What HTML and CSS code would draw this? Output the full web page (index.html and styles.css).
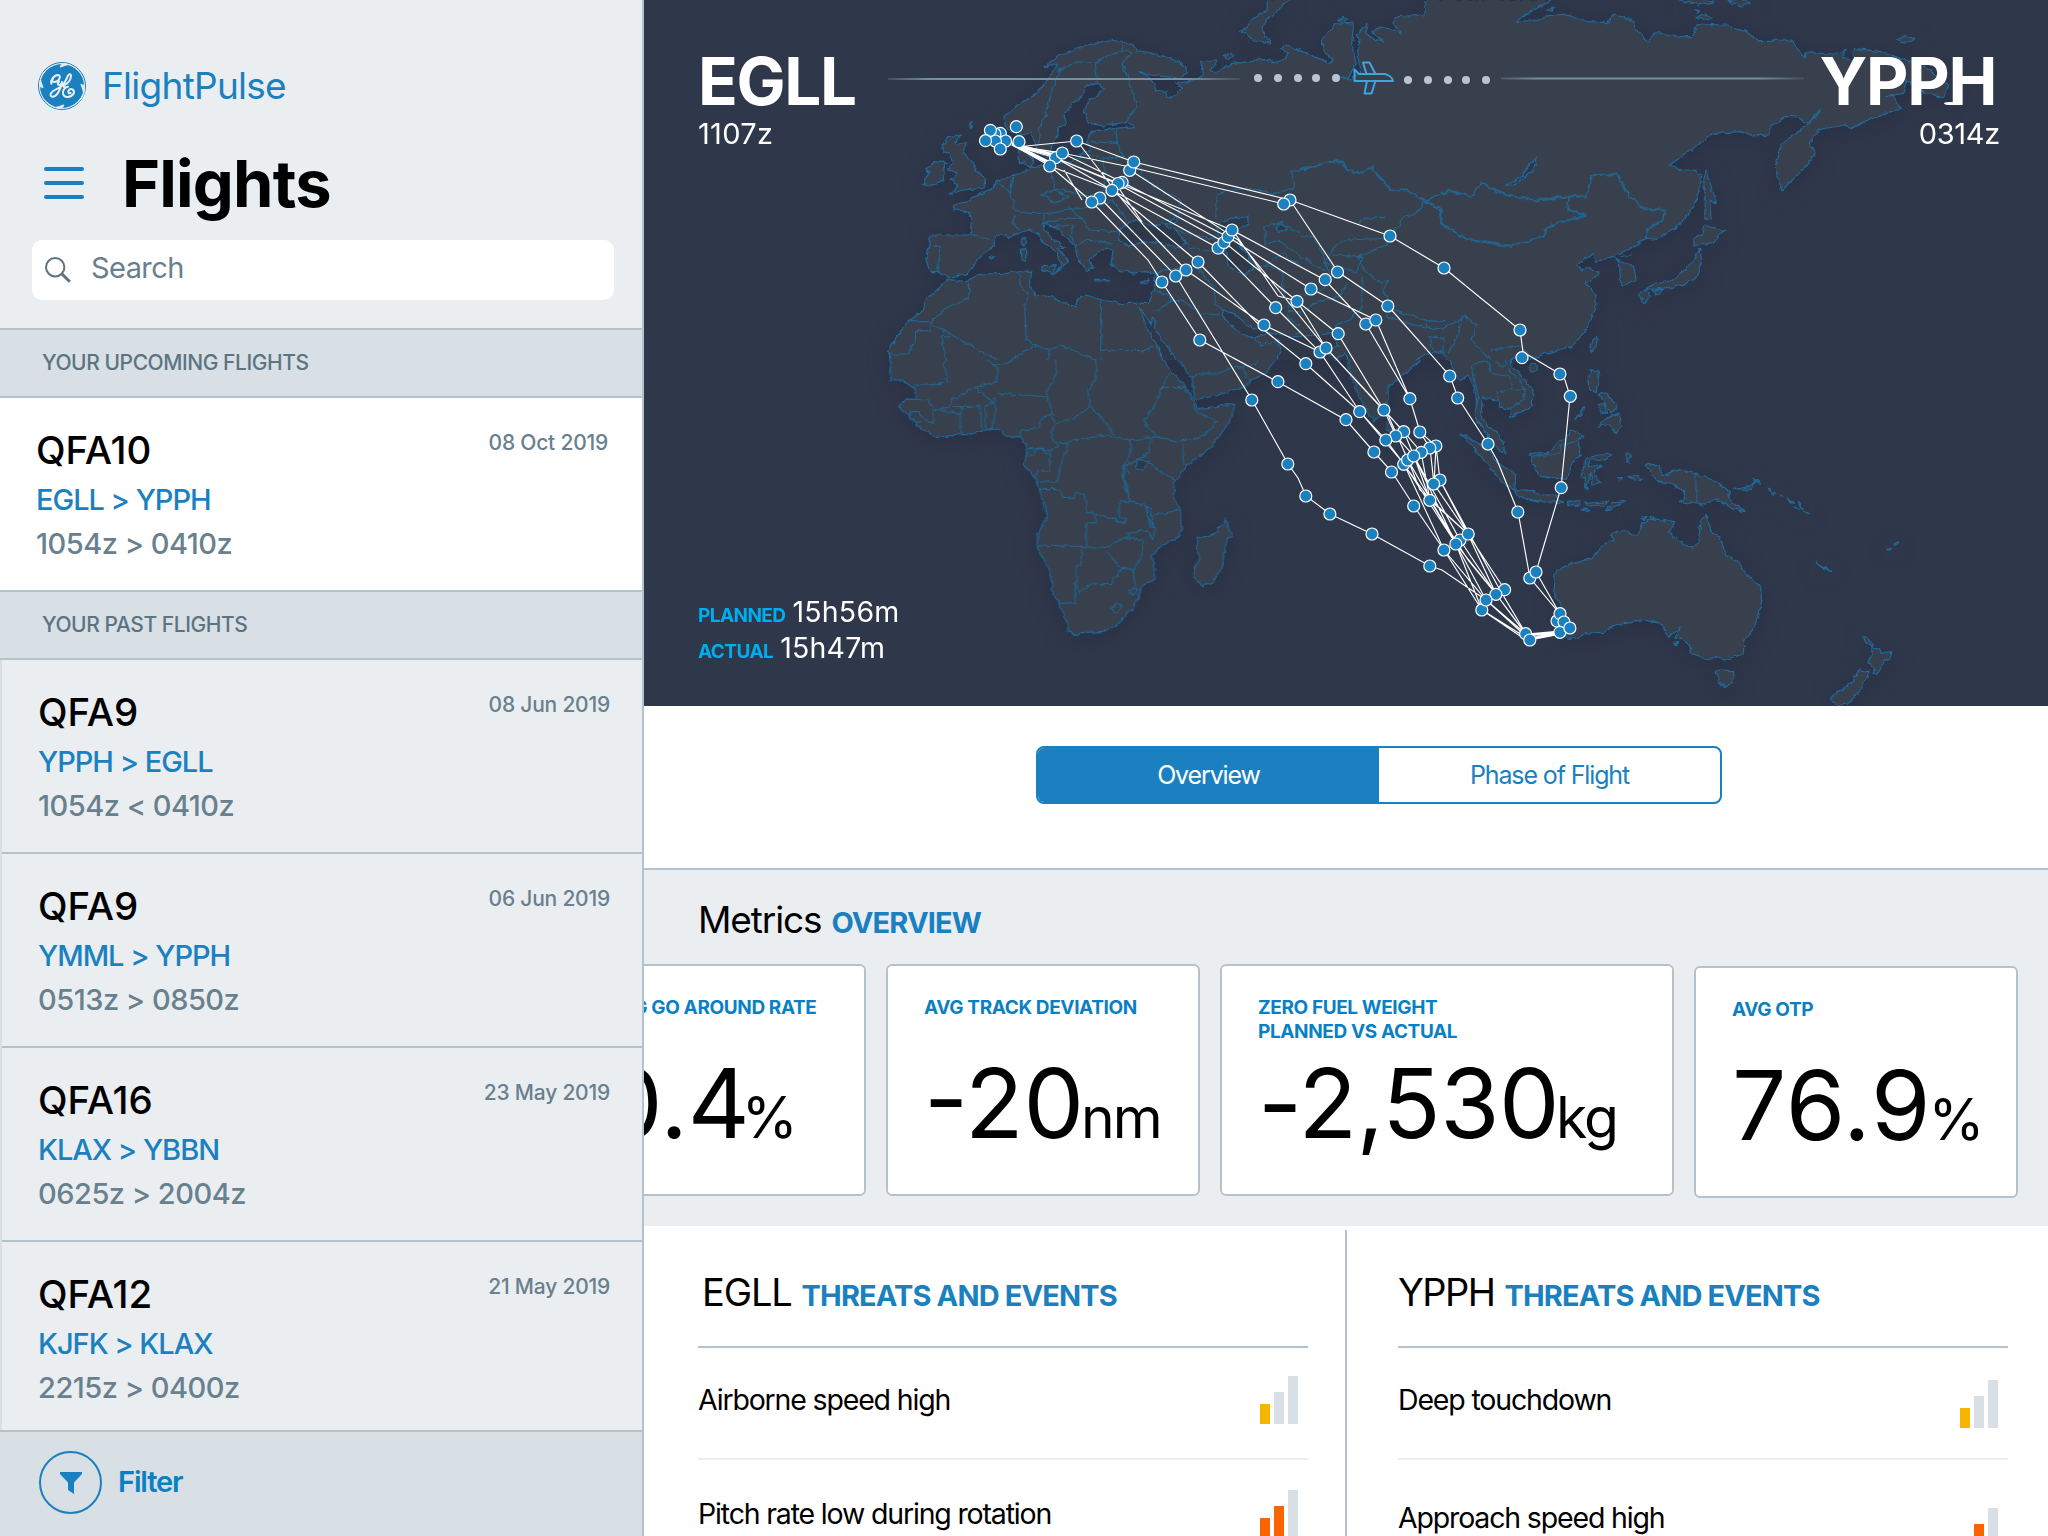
FILE: index.html
```html
<!DOCTYPE html>
<html lang="en">
<head>
<meta charset="utf-8">
<title>FlightPulse – Flights</title>
<link rel="stylesheet" href="styles.css">
</head>
<body>
<div class="app">
  <aside class="sidebar">
    <header class="side-head">
      <div class="brand">
        <svg class="brand-logo" viewBox="18 18 144 144">
          <circle class="logo-ring" cx="90" cy="90" r="70.5"/>
          <circle class="logo-disc" cx="90" cy="90" r="66"/>
          <path class="logo-swirl" d="M86 27C100 20 122 26 136 42M153 86C162 100 156 124 140 137M94 153C80 161 56 154 43 138M27 94C19 80 26 56 41 43"/>
          <path class="logo-blob" d="M84 33C88 25 98 22 108 26C98 27 92 32 84 33ZM147 84C155 88 158 98 154 108C153 98 148 92 147 84ZM96 147C92 155 82 158 72 154C82 153 88 148 96 147ZM33 96C25 92 22 82 26 72C27 82 32 88 33 96Z"/>
          <path class="logo-mono" d="M58 83C55 72 66 57 78 57C88 57 84 76 68 78C60 79 59 71 64 66M81 76C74 86 80 92 90 82M90 78C86 104 72 124 60 122C50 118 58 106 72 100C88 94 98 82 104 68C108 54 116 50 117 60C116 74 104 84 96 88C92 92 96 96 108 92C96 94 90 106 94 116C98 126 116 126 125 113C129 102 118 95 111 102C106 108 110 114 116 111"/>
        </svg>
        <span class="brand-name">FlightPulse</span>
      </div>
      <div class="title-row">
        <svg class="menu-icon" viewBox="0 0 40 34"><path d="M2 3H38M2 17H38M2 31H38"/></svg>
        <h1 class="title">Flights</h1>
      </div>
      <div class="search">
        <svg class="search-icon" viewBox="0 0 26 26"><circle cx="10.2" cy="10.2" r="9.2"/><path class="handle" d="M17 17L24.8 24.8"/></svg>
        <span class="search-text">Search</span>
      </div>
    </header>
    <h2 class="group-label upcoming-label">YOUR UPCOMING FLIGHTS</h2>
    <article class="flight flight-current">
      <div class="flight-main"><div class="flight-no">QFA10</div><div class="flight-route">EGLL &gt; YPPH</div><div class="flight-time">1054z &gt; 0410z</div></div>
      <time class="flight-date">08 Oct 2019</time>
    </article>
    <h2 class="group-label past-label">YOUR PAST FLIGHTS</h2>
    <div class="past-list">
      <article class="flight">
        <div class="flight-main"><div class="flight-no">QFA9</div><div class="flight-route">YPPH &gt; EGLL</div><div class="flight-time">1054z &lt; 0410z</div></div>
        <time class="flight-date">08 Jun 2019</time>
      </article>
      <article class="flight">
        <div class="flight-main"><div class="flight-no">QFA9</div><div class="flight-route">YMML &gt; YPPH</div><div class="flight-time">0513z &gt; 0850z</div></div>
        <time class="flight-date">06 Jun 2019</time>
      </article>
      <article class="flight">
        <div class="flight-main"><div class="flight-no">QFA16</div><div class="flight-route">KLAX &gt; YBBN</div><div class="flight-time">0625z &gt; 2004z</div></div>
        <time class="flight-date">23 May 2019</time>
      </article>
      <article class="flight">
        <div class="flight-main"><div class="flight-no">QFA12</div><div class="flight-route">KJFK &gt; KLAX</div><div class="flight-time">2215z &gt; 0400z</div></div>
        <time class="flight-date">21 May 2019</time>
      </article>
    </div>
    <footer class="filter-bar">
      <span class="filter-circle"><svg class="filter-icon" viewBox="0 0 22 22"><path d="M0 0H22V2L14 10.500V22L8 18V10.500L0 2Z"/></svg></span>
      <span class="filter-text">Filter</span>
    </footer>
  </aside>

  <main class="main">
    <section class="map-panel">
      <svg class="map" viewBox="644 0 1404 706">
        <defs>
          <filter id="coastline" x="-5%" y="-5%" width="110%" height="110%">
            <feTurbulence type="fractalNoise" baseFrequency=".16" numOctaves="2" seed="4" result="noise"/>
            <feDisplacementMap in="SourceGraphic" in2="noise" scale="5" xChannelSelector="R" yChannelSelector="G"/>
          </filter>
        </defs>
        <g class="world"><g filter="url(#coastline)">
          <!-- Europe, north Africa and the Middle East -->
          <svg x="640" y="0" width="660" height="360" viewBox="0 0 1478.400 1080" preserveAspectRatio="none">
            <path class="land" d="M1700 20L1568 50L1535 100L1528 125L1545 150L1553 185L1535 180L1490 155L1440 135L1435 145L1452 155L1445 180L1420 188L1385 175L1370 185L1325 190L1300 210L1290 222L1278 215L1282 200L1290 195L1288 180L1255 182L1260 200L1262 225L1250 235L1225 245L1200 250L1215 265L1195 290L1180 292L1178 275L1155 270L1150 245L1140 232L1120 215L1145 225L1210 235L1228 215L1215 190L1175 170L1140 158L1115 152L1105 135L1085 125L1050 120L1010 135L970 150L940 165L905 200L935 195L915 240L885 285L850 310L815 350L820 385L840 400L860 405L875 395L885 430L893 460L912 470L930 420L940 385L955 370L950 345L970 310L990 290L1000 255L1020 250L1040 265L1025 285L1005 300L995 335L1005 370L1040 378L1090 365L1110 380L1065 385L1010 395L1000 425L1010 450L985 460L990 475L960 485L920 495L885 502L870 500L862 485L850 490L848 450L865 440L870 465L885 480L870 510L840 525L820 530L800 545L790 565L765 580L750 590L735 605L700 615L705 630L735 635L745 665L740 705L650 705L650 735L640 780L650 815L670 815L688 833L735 820L755 780L790 740L800 705L830 710L870 690L890 700L905 730L935 760L945 790L930 820L950 795L960 785L945 760L935 745L955 745L920 710L905 690L903 670L930 680L960 720L975 740L980 775L1000 815L1015 805L1005 780L1025 760L1045 745L1060 750L1055 790L1070 810L1100 820L1130 815L1155 820L1150 870L1140 910L1080 910L1035 900L1000 885L985 890L975 920L940 905L920 890L885 885L870 850L880 815L850 812L820 820L765 822L730 845L690 838L665 870L640 900L635 930L600 965L575 1010L557 1055L560 1080L560 1200L1700 1200Z"/>
            <path class="land" d="M718 405L690 410L680 430L678 455L695 460L700 490L690 510L712 520L695 540L712 558L692 582L725 570L768 565L775 535L755 515L745 490L725 460L730 432L705 430ZM672 480L640 505L650 520L633 550L655 558L682 540L680 500L688 490ZM1405 -10L1405 30L1370 60L1348 95L1375 120L1415 130L1395 95L1400 60L1430 35L1440 15L1470 -10ZM900 800L930 797L928 822L900 808ZM852 748L866 745L866 780L854 784ZM860 712L866 725L860 738L855 725ZM1018 838L1050 838L1048 843L1020 843ZM1120 848L1142 838L1134 852ZM782 774L788 768L792 774L787 780ZM737 368L744 365L741 384ZM1308 168L1320 157L1333 166L1322 178L1312 176Z"/>
            <path class="sea" d="M1072 720L1075 690L1095 665L1120 660L1145 680L1170 668L1205 650L1205 665L1175 675L1200 690L1225 730L1200 745L1165 730L1130 725L1095 738ZM1292 678L1320 655L1362 650L1362 672L1330 690L1340 730L1365 770L1372 810L1350 825L1320 800L1315 760L1300 720ZM1305 930L1330 940L1370 985L1401 990L1423 1020L1437 1050L1420 1100L1500 1100L1500 1010L1461 1010L1414 998L1385 1010L1375 1015L1345 1000L1310 960ZM1120 925L1138 960L1145 975L1150 950L1158 1000L1192 1060L1210 1100L1178 1100L1160 1040L1135 985ZM1425 680L1440 668L1448 690L1430 694Z"/>
            <path class="border" d="M1080 125L1080 155L1050 165L1020 190L980 185L940 210L925 260L910 340L895 380L893 430M1020 190L1025 250M1085 150L1100 160L1080 190L1095 240L1112 320L1085 370M1065 385L1070 430L1010 425M1070 430L1085 470L1040 475L990 460M1085 470L1120 490L1125 530L1165 570L1210 600L1205 645M920 500L928 565L960 575L1000 590L1040 575L1060 590M900 585L930 570L960 590L930 610ZM835 530L830 580L840 630L870 640M800 545L830 580M840 640L835 670L850 690M740 705L790 720M655 735L675 740L665 815M870 640L920 640L960 630L1010 620L1040 610M905 640L905 670L950 655L990 655L1005 690L1070 695M930 680L970 675L965 710M975 740L1000 720L1060 730M975 740L965 700M1010 620L1060 600L1090 660M960 620L990 655M1040 475L1040 575M1290 655L1290 590L1310 570L1370 565L1420 580L1465 565L1460 510L1480 510L1568 485M1400 735L1400 680L1430 670L1460 690L1500 705L1568 707M1400 735L1430 720L1480 770L1530 790M1372 800L1400 795L1440 815L1440 870L1455 930L1450 950L1490 985L1470 1000M1155 820L1200 805L1245 800L1285 860L1290 910L1305 935M1145 930L1165 930L1185 905L1215 900L1255 940L1300 945M1150 870L1190 890L1185 905M1225 740L1260 750L1310 760M1200 690L1260 710L1310 720M1455 935L1510 935M1375 1015L1390 1035L1435 1020M1400 795L1440 760L1500 820M735 845L738 895L690 920L650 965M600 965L652 965L652 992L615 992L615 1030L600 1062L557 1062M650 970L800 1080M675 1005L685 1080M675 1005L695 1010M850 812L855 865L870 885L862 920L865 1020L888 1035L830 1080M888 1035L920 1050L940 1035L1025 1080M920 1050L915 1080M1032 900L1032 1080M1032 1050L1130 1052L1150 1040"/>
          </svg>
          <!-- Russia, China and Japan -->
          <svg x="1300" y="0" width="748" height="360" viewBox="0 0 1568 1080" preserveAspectRatio="none">
            <path class="land" d="M-40 140L0 152L40 175L62 190L70 180L48 150L47 115L62 95L75 68L112 72L108 140L118 190L100 235L85 235L105 240L125 215L122 165L125 125L118 105L140 70L138 100L155 118L175 122L150 95L180 80L215 100L195 70L200 50L262 45L262 -20L545 -20L510 15L470 45L452 68L490 60L520 50L560 45L600 65L645 68L655 42L695 58L705 90L730 125L745 98L800 110L820 110L835 72L890 75L935 95L960 122L1030 120L1045 150L1060 170L1060 158L1120 162L1145 150L1135 175L1160 180L1160 145L1220 155L1270 180L1310 200L1360 255L1350 290L1310 280L1270 240L1265 280L1230 290L1245 290L1258 325L1200 355L1158 382L1140 375L1085 390L1070 430L1080 460L1060 500L1040 530L1010 570L1000 530L998 480L1010 430L1060 380L1085 345L1090 330L1065 370L1040 350L1015 350L985 380L985 405L950 408L925 395L865 400L830 440L775 495L800 510L830 510L842 530L830 610L800 670L750 718L725 715L700 740L655 770L670 790L672 855L705 840L700 800L685 795L655 770L620 785L615 760L580 795L590 810L600 800L628 820L600 850L620 885L620 925L600 990L570 1040L510 1062L480 1080L450 1140L-40 1140Z"/>
            <path class="land" d="M852 508L862 560L873 608L858 600L862 660L848 655L850 590L846 540ZM848 675L890 692L865 728L825 738L830 710L845 700ZM838 745L842 780L830 835L790 860L740 868L722 872L735 855L780 842L800 815L822 790ZM720 870L735 885L722 910L712 885ZM740 870L762 868L748 885ZM622 1012L622 1035L612 1055L606 1035ZM1250 120L1268 108L1291 116L1275 128ZM832 50L850 40L864 54L846 60ZM895 5L920 -5L945 10L925 18ZM795 0L830 -10L870 5L835 15ZM80 58L92 52L100 60L88 64ZM515 28L535 24L530 34ZM828 32L838 32L834 39Z"/>
            <path class="sea" d="M-20 1010L40 1005L68 1000L80 1040L52 1052L75 1078L95 1062L103 1100L-20 1100ZM235 1100L253 1066L300 1055L310 1100ZM430 1100L440 1078L461 1066L475 1100ZM495 475L490 510L450 555L432 557L465 530L480 495Z"/>
            <path class="border" d="M120 675L135 655L177 652M0 707L30 710L50 770L60 820L50 870L0 885M0 770L50 810M185 715L90 720L75 740L50 790L80 800L120 820L130 770L70 765M262 602L245 640L215 650L210 680L190 700L180 735L120 770L135 810L170 850L185 840L175 870L185 900L185 950M180 950L265 985L300 985L345 948L370 975L360 1020L370 1040L400 1080M195 930L265 962L305 965M130 830L130 920L105 960L75 975L80 1020M265 962L265 985M270 1010L305 1015L300 1050L280 1055L270 1010M340 950L330 1010L310 1060M400 1050L460 1040L490 1075M670 770L695 765M0 940L30 910L80 890L100 850"/>
            <path class="border strong" d="M0 510L70 483L90 485L95 508L120 520L150 503L190 570L225 572L262 602L315 573L360 590L380 548L430 585L500 602L565 588L600 590L612 525L665 523L690 590L725 628L765 628L760 660L727 690L725 715M262 602L295 630L298 672L350 718L440 738L510 710L515 682L575 655L602 648L560 628L565 590"/>
          </svg>
          <!-- Africa and the Arabian sea -->
          <svg x="860" y="360" width="540" height="346" viewBox="0 180 1411.200 1038" preserveAspectRatio="none">
            <path class="land" d="M78 100L74 163L82 200L78 240L110 240L140 265L148 298L120 297L100 318L130 350L150 378L200 412L265 403L282 405L345 385L368 390L385 412L418 410L435 440L435 470L425 492L460 535L475 590L487 650L465 700L462 740L495 810L505 885L520 905L540 965L545 995L562 1007L580 998L635 995L670 975L720 915L732 880L735 860L768 838L770 790L760 770L790 735L835 710L840 690L838 630L820 590L822 545L850 500L920 440L965 365L982 310L930 320L885 325L870 300L862 275L810 210L795 180L770 100Z"/>
            <path class="land" d="M800 100L835 185L868 235L875 298L930 288L1010 258L1020 240L1060 220L1085 180L1110 100ZM1270 100L1280 215L1305 290L1330 345L1342 362L1372 335L1380 300L1380 260L1411 235L1500 200L1500 100ZM1378 365L1390 380L1385 398L1376 390ZM955 655L972 710L960 715L945 800L922 850L895 858L875 835L873 805L888 775L880 740L885 712L915 708L935 695L935 680L948 678Z"/>
            <path class="sea" d="M725 478L755 482L740 512L722 510ZM750 620L758 625L768 682L758 680Z"/>
            <path class="border" d="M220 180L228 250L145 253L140 265M220 160L228 180M330 180L350 195L358 200L358 245L300 262L240 300L232 325L195 330M350 195L385 190L400 180M300 262L340 300L350 310L325 318M511 170L512 225L485 280L495 310L508 345L480 350L465 385L425 390L418 410M360 280L430 285L485 290M350 290L355 330L345 385M617 180L615 240L595 270L600 320L640 365L665 405M600 320L560 355L510 372L498 345M510 372L500 400L518 440L500 452L440 445M518 430L570 420L640 405L705 420L775 410L740 360L775 310L790 260L810 220M785 262L845 262L870 295M775 410L825 425L885 415L935 365L885 340L870 310M845 425L848 495M705 420L708 455L685 510L692 560L705 600M760 415L755 460L720 480L690 500L705 520M750 485L820 540M265 403L262 350L265 320L315 318L318 388M328 320L328 388M240 320L265 320M120 297L180 300L192 330L195 370L170 360L155 335L135 335L130 350L140 370L158 368M195 330L262 340M435 465L455 465L460 445L480 445L480 460L498 462L495 510L465 510L460 530M545 430L520 510L515 545L470 547M518 430L545 430M470 566L522 566L530 595L560 595L560 582L588 582L592 638L615 640L615 670L592 672L592 740L462 735M592 740L645 742L690 712L740 720L735 770L715 808L685 805L645 755M685 805L655 850L605 852L572 878L565 850L565 800L578 798L580 745M562 850L562 908L525 910M615 640L660 655L690 670L695 655L675 648L680 600L745 615L750 640L770 690L765 722L750 690L702 700L705 712M765 645L835 630M712 808L722 870L735 870M672 908L685 920L668 938L657 925ZM713 862L722 874L713 886L705 874ZM868 235L885 222L930 222L960 205L1000 200L1010 235M1000 200L1035 195L1040 180M690 500L692 540L705 600"/>
          </svg>
          <!-- South-east Asia and Oceania -->
          <svg x="1400" y="360" width="648" height="346" viewBox="0 180 1568 1038" preserveAspectRatio="none">
            <path class="land" d="M-40 250L0 232L48 185L52 100L-40 100ZM112 100L125 200L145 243L165 225L180 260L185 300L183 355L205 390L220 430L253 462L250 430L235 395L215 385L195 345L200 295L235 300L240 320L268 330L265 352L320 320L322 270L300 235L270 200L270 100ZM315 195L330 192L333 210L320 217L313 205Z"/>
            <path class="land" d="M147 402L180 420L215 450L235 490L280 520L278 570L250 550L215 500L180 445ZM275 572L320 575L340 585L375 585L395 608L345 605L290 592ZM315 460L330 462L360 460L385 420L400 415L415 390L443 405L430 425L437 468L415 490L405 538L340 530L320 490ZM515 462L495 478L460 480L455 500L490 495L470 515L485 550L465 552L462 520L450 568L448 530L438 530L450 475L480 465ZM405 605L435 602L435 615L408 618ZM450 610L505 605L495 615L455 618ZM440 625L462 632L450 635ZM498 632L512 612L547 602L515 625ZM460 210L483 212L478 250L475 278L460 270L455 245ZM480 278L500 280L525 318L510 340L490 300ZM478 310L495 315L500 340L485 335ZM480 378L500 355L530 340L537 380L522 400L505 375ZM447 320L440 340L423 358ZM548 458L562 470L552 490L546 475ZM529 533L540 532L540 540L530 540ZM555 530L575 526L588 538L565 540Z"/>
            <path class="land" d="M592 497L612 490L630 500L635 530L675 508L715 522L760 542L800 575L795 595L835 635L800 625L765 597L735 615L675 605L692 595L685 570L650 550L620 540L605 510ZM810 568L845 560L860 545L850 568L825 572ZM857 532L870 550L862 545ZM890 565L908 580L902 586ZM913 582L924 592ZM937 595L955 607L945 605ZM964 606L976 625L968 620ZM953 620L966 628ZM976 634L988 641ZM1178 748L1190 746L1184 755ZM1193 733L1206 728L1200 736ZM1007 787L1045 815L1035 812ZM583 655L598 653L590 660ZM605 650L615 652L608 658Z"/>
            <path class="land" d="M382 808L420 790L465 775L490 735L515 720L512 705L540 688L560 705L575 705L588 670L610 655L640 662L665 665L650 695L675 725L708 745L722 725L728 665L738 643L748 675L755 700L775 712L788 765L815 780L830 810L873 865L875 905L858 980L835 1020L830 1060L785 1083L765 1070L752 1080L705 1060L700 1035L680 1015L665 1015L678 985L650 1012L635 975L600 958L560 968L520 975L495 997L450 998L430 1015L405 1015L395 990L392 930L370 870L375 820ZM765 1113L808 1115L805 1145L787 1163L772 1145ZM662 1030L675 1028L668 1034ZM1120 1008L1135 1020L1145 1042L1160 1045L1165 1060L1190 1055L1187 1075L1170 1085L1155 1123L1145 1120L1148 1105L1132 1085L1142 1062L1142 1042L1125 1025ZM1112 1110L1135 1115L1118 1160L1085 1212L1060 1215L1040 1200L1055 1180L1090 1150Z"/>
            <path class="border" d="M175 195L180 240L190 290L182 350M175 195L210 180L220 220L265 230L272 270L235 275L238 310M272 270L300 270L300 300L268 325M255 180L265 215L290 240L305 290M230 180L240 200L260 195M320 468L385 462L390 435L425 425M716 522L716 614"/>
          </svg>
        </g></g>
        <path class="track" d="M1016 147L1077 141L1134 162L1290 200L1390 236L1444 268L1520 330L1523 352L1560 374L1565 380L1570 396L1561 488L1536 572L1560 614
          M1016 147L1062 153L1130 167L1284 204L1292 203L1338 272L1388 306L1450 376L1458 398L1488 444L1497 460L1518 512L1530 578L1560 614
          M1016 146L1056 158L1118 183L1232 230L1325 280L1366 324L1410 399L1420 432L1436 446L1440 480L1468 534L1505 590
          M1018 146L1062 153L1122 182L1228 237L1311 289L1376 320L1410 399L1420 432L1430 448L1434 484L1468 534L1496 594L1526 634
          M1018 147L1056 158L1118 184L1224 242L1297 301L1338 334L1384 410L1404 432L1421 452L1430 500L1468 534L1496 594L1526 634
          M1018 148L1050 166L1112 190L1218 248L1276 308L1320 352L1360 412L1404 464L1456 544L1486 600L1530 640
          M1130 170L1238 240L1281 293L1326 348L1384 410L1396 436L1414 456L1460 540L1496 594L1526 634
          M1234 232L1278 296L1297 301L1326 348L1388 415L1408 460L1456 544L1496 594
          M1077 141L1120 197L1145 227L1186 270L1264 325L1320 352L1360 412L1386 440L1404 464L1444 550L1486 600L1526 634
          M1056 158L1112 190L1198 262L1264 330L1306 364L1360 412L1386 440L1430 500L1456 544L1482 610L1530 640
          M1050 166L1092 202L1148 260L1162 282L1200 340L1278 382L1346 420L1374 452L1392 472L1414 506L1444 550L1482 610L1530 640
          M1064 170L1082 200M1100 198L1176 276L1252 400L1288 464L1298 478L1306 496L1330 514L1372 534L1430 566L1442 570L1486 600L1530 640
          M1142 222L1120 190M1434 484L1436 446M1440 480L1500 590L1526 634M1408 460L1420 490L1468 534M1414 456L1430 500L1468 560L1496 594
          M1482 610L1526 640M1530 578L1560 614M1496 594L1530 640M1404 432L1414 456L1456 544"/>
        <path class="track bundle" d="M1012 144L1058 156M1012 144L1052 164M1527 635L1560 632M1530 639L1556 634"/>
        <g class="waypoints">
          <circle cx="1016.300" cy="126.700" r="6"/><circle cx="1000.300" cy="133.300" r="6"/><circle cx="995" cy="134" r="6"/><circle cx="1005.600" cy="141" r="6"/><circle cx="995.400" cy="141" r="6"/><circle cx="990.400" cy="130.300" r="6"/><circle cx="985.500" cy="140.700" r="6"/><circle cx="1000.300" cy="149" r="6"/><circle cx="1019" cy="141.700" r="6"/>
          <circle cx="1076.600" cy="141" r="6"/><circle cx="1055.600" cy="157.700" r="6"/><circle cx="1062.300" cy="153" r="6"/><circle cx="1049.800" cy="166" r="6"/><circle cx="1129.700" cy="170.300" r="6"/><circle cx="1133.700" cy="162" r="6"/><circle cx="1122.100" cy="182.300" r="6"/><circle cx="1118.100" cy="183.500" r="6"/><circle cx="1111.900" cy="190.300" r="6"/><circle cx="1099.800" cy="198" r="6"/><circle cx="1091.800" cy="202" r="6"/>
          <circle cx="1290" cy="200" r="6"/><circle cx="1283.700" cy="204" r="6"/><circle cx="1218.100" cy="248" r="6"/><circle cx="1223.900" cy="242.500" r="6"/><circle cx="1228" cy="236.600" r="6"/><circle cx="1232" cy="230" r="6"/><circle cx="1198" cy="262" r="6"/><circle cx="1186" cy="270" r="6"/><circle cx="1175.700" cy="276" r="6"/><circle cx="1161.900" cy="282" r="6"/><circle cx="1199.800" cy="340" r="6"/>
          <circle cx="1275.700" cy="307.700" r="6"/><circle cx="1297" cy="301.300" r="6"/><circle cx="1264" cy="325" r="6"/><circle cx="1311" cy="289" r="6"/><circle cx="1325.200" cy="279.700" r="6"/><circle cx="1337.500" cy="272" r="6"/><circle cx="1338.200" cy="333.700" r="6"/><circle cx="1320" cy="352" r="6"/><circle cx="1326" cy="348" r="6"/>
          <circle cx="1390" cy="236" r="6"/><circle cx="1444" cy="268" r="6"/><circle cx="1520" cy="330" r="6"/><circle cx="1522" cy="357.700" r="6"/><circle cx="1387.800" cy="306" r="6"/><circle cx="1365.800" cy="324" r="6"/><circle cx="1375.800" cy="320" r="6"/>
          <circle cx="1251.800" cy="400" r="6"/><circle cx="1277.900" cy="381.700" r="6"/><circle cx="1305.800" cy="363.700" r="6"/><circle cx="1346" cy="419.700" r="6"/><circle cx="1359.700" cy="411.700" r="6"/><circle cx="1373.900" cy="452" r="6"/><circle cx="1383.900" cy="410" r="6"/><circle cx="1391.500" cy="472" r="6"/><circle cx="1403.700" cy="431.700" r="6"/><circle cx="1395.700" cy="436" r="6"/><circle cx="1385.800" cy="440" r="6"/><circle cx="1409.900" cy="398.700" r="6"/><circle cx="1419.800" cy="432" r="6"/>
          <circle cx="1435.900" cy="446" r="6"/><circle cx="1429.800" cy="448" r="6"/><circle cx="1403.700" cy="464.300" r="6"/><circle cx="1421.300" cy="452.300" r="6"/><circle cx="1407.600" cy="460" r="6"/><circle cx="1413.700" cy="456" r="6"/><circle cx="1440" cy="480" r="6"/><circle cx="1433.600" cy="484" r="6"/><circle cx="1429.800" cy="500.300" r="6"/><circle cx="1413.700" cy="506" r="6"/>
          <circle cx="1287.800" cy="464" r="6"/><circle cx="1305.800" cy="496" r="6"/><circle cx="1329.900" cy="514" r="6"/><circle cx="1372" cy="534" r="6"/><circle cx="1429.800" cy="566" r="6"/><circle cx="1443.900" cy="550" r="6"/><circle cx="1449.700" cy="376" r="6"/><circle cx="1457.700" cy="398" r="6"/><circle cx="1488" cy="444" r="6"/><circle cx="1517.800" cy="512" r="6"/>
          <circle cx="1559.900" cy="374" r="6"/><circle cx="1570.300" cy="396.300" r="6"/><circle cx="1561.200" cy="487.700" r="6"/><circle cx="1460" cy="540" r="6"/><circle cx="1468.200" cy="534" r="6"/><circle cx="1455.800" cy="544" r="6"/><circle cx="1504.600" cy="589.700" r="6"/><circle cx="1495.900" cy="594.300" r="6"/><circle cx="1481.800" cy="610" r="6"/><circle cx="1486" cy="600" r="6"/>
          <circle cx="1529.800" cy="578" r="6"/><circle cx="1536" cy="572" r="6"/><circle cx="1557" cy="621" r="6"/><circle cx="1560" cy="613.700" r="6"/><circle cx="1564" cy="622" r="6"/><circle cx="1559.900" cy="632.300" r="6"/><circle cx="1569.900" cy="628" r="6"/><circle cx="1525.600" cy="633.700" r="6"/><circle cx="1529.800" cy="640" r="6"/>
        </g>
        <ellipse cx="1951" cy="103.500" rx="7" ry="1.600" fill="#fff"/>
      </svg>
      <div class="map-head">
        <div class="airport"><div class="airport-code dep-code">EGLL</div><div class="airport-time">1107z</div></div>
        <svg class="route" viewBox="880 40 932 70">
          <defs>
            <linearGradient id="fade"><stop offset="0" stop-color="#76909e" stop-opacity=".3"/><stop offset=".12" stop-color="#76909e"/><stop offset=".85" stop-color="#76909e"/><stop offset="1" stop-color="#76909e" stop-opacity=".2"/></linearGradient>
          </defs>
          <rect x="888" y="78" width="352" height="2" fill="url(#fade)"/>
          <rect x="1501" y="77.500" width="303" height="2" fill="url(#fade)"/>
          <g class="route-dots"><circle cx="1258" cy="78" r="4"/><circle cx="1278" cy="78" r="4"/><circle cx="1298" cy="78" r="4"/><circle cx="1316" cy="78" r="4"/><circle cx="1336" cy="78" r="4"/><circle cx="1408" cy="80" r="4"/><circle cx="1428" cy="80" r="4"/><circle cx="1448" cy="80" r="4"/><circle cx="1466" cy="80" r="4"/><circle cx="1486" cy="80" r="4"/></g>
          <path class="plane" d="M1354.500 69.500L1359 74H1366.500L1363 62.500H1369.500L1375.500 74H1385C1389 75 1392.500 78 1393 81H1375.500L1371.500 93.500H1364.500L1367 81H1354.500ZM1366.500 74H1375.500M1367 81H1375.500"/>
        </svg>
        <div class="airport arrival"><div class="airport-code arr-code">YPPH</div><div class="airport-time">0314z</div></div>
      </div>
      <dl class="durations">
        <div class="duration"><dt class="planned-key">PLANNED</dt><dd class="planned-val">15h56m</dd></div>
        <div class="duration"><dt class="actual-key">ACTUAL</dt><dd class="actual-val">15h47m</dd></div>
      </dl>
    </section>

    <section class="tabs-area">
      <div class="segmented"><span class="tab tab-active">Overview</span><span class="tab tab-phase">Phase of Flight</span></div>
    </section>

    <section class="metrics">
      <h2 class="heading"><span class="metrics-name">Metrics</span><span class="tag metrics-tag">OVERVIEW</span></h2>
      <div class="cards">
        <div class="card card-around"><div class="card-label label-around">AVG GO AROUND RATE</div><div class="card-value"><span class="num-around">0.4</span><span class="unit">%</span></div></div>
        <div class="card card-track"><div class="card-label label-track">AVG TRACK DEVIATION</div><div class="card-value"><span class="num-track">-20</span><span class="unit">nm</span></div></div>
        <div class="card card-fuel"><div class="card-label label-fuel">ZERO FUEL WEIGHT<br>PLANNED VS ACTUAL</div><div class="card-value"><span class="num-fuel">-2,530</span><span class="unit">kg</span></div></div>
        <div class="card card-otp"><div class="card-label label-otp">AVG OTP</div><div class="card-value"><span class="num-otp">76.9</span><span class="unit">%</span></div></div>
      </div>
    </section>

    <section class="threats">
      <div class="threat-col">
        <h2 class="heading threat-heading"><span class="egll-name">EGLL</span><span class="tag threat-tag">THREATS AND EVENTS</span></h2>
        <div class="event"><span class="event-name">Airborne speed high</span><span class="bars low"><i></i><i></i><i></i></span></div>
        <div class="event second"><span class="event-name">Pitch rate low during rotation</span><span class="bars medium"><i></i><i></i><i></i></span></div>
      </div>
      <div class="threat-col right">
        <h2 class="heading threat-heading"><span class="ypph-name">YPPH</span><span class="tag threat-tag">THREATS AND EVENTS</span></h2>
        <div class="event"><span class="event-name">Deep touchdown</span><span class="bars low"><i></i><i></i><i></i></span></div>
        <div class="event second"><span class="event-name">Approach speed high</span><span class="bars medium"><i></i><i></i><i></i></span></div>
      </div>
    </section>
  </main>
</div>
</body>
</html>
```
FILE: styles.css
```css
:root {
  --blue: #1b80bf;
  --rule: #b4c2cc;
  --pale: #eaeef1;
  --bar: #d8dfe5;
  --slate: #69808e;
}
* { box-sizing: border-box; }
body {
  margin: 0;
  width: 2048px;
  height: 1536px;
  overflow: hidden;
  background: #fff;
  color: #000;
  font-family: Inter, "Liberation Sans", sans-serif;
}
h1, h2, dl, dd { margin: 0; font-weight: 400; }
span, time, div { white-space: nowrap; }
.app { display: flex; height: 1536px; }

/* Sidebar */
.sidebar {
  width: 644px;
  flex: none;
  display: flex;
  flex-direction: column;
  height: 1536px;
  background: var(--pale);
  border-right: 2px solid var(--rule);
}
.side-head { height: 328px; flex: none; padding-top: 62px; }
.brand { display: flex; align-items: center; gap: 16px; height: 48px; padding-left: 38px; }
.brand-logo { width: 48px; height: 48px; }
.logo-ring { fill: none; stroke: var(--blue); stroke-width: 3; }
.logo-disc { fill: var(--blue); }
.logo-swirl { fill: none; stroke: #eaeef1; stroke-width: 3; stroke-linecap: round; }
.logo-blob { fill: #eaeef1; stroke: #eaeef1; stroke-width: 3; }
.logo-mono { fill: none; stroke: #eaeef1; stroke-width: 6; stroke-linecap: round; stroke-linejoin: round; }
.brand-name { font-size: 37px; line-height: 48px; color: var(--blue); letter-spacing: -.02em; }
.title-row { display: flex; align-items: center; gap: 38px; height: 80px; margin-top: 34px; padding-left: 44px; }
.menu-icon { width: 40px; height: 34px; margin-bottom: 2px; fill: none; stroke: var(--blue); stroke-width: 4; stroke-linecap: round; }
.title { font-size: 65px; line-height: 80px; font-weight: 700; letter-spacing: -.013em; }
.search { display: flex; align-items: center; gap: 20px; height: 60px; margin: 16px 28px 0 32px; padding-left: 13px; background: #fff; border-radius: 10px; }
.search-icon { width: 26px; height: 26px; fill: none; stroke: #5c7482; stroke-width: 2; }
.search-icon .handle { stroke-width: 3; }
.search-text { font-size: 29px; line-height: 40px; padding-bottom: 5px; color: var(--slate); letter-spacing: -.02em; }
.group-label {
  flex: none;
  height: 70px;
  padding-left: 42px;
  border-top: 2px solid var(--rule);
  border-bottom: 2px solid var(--rule);
  background: var(--bar);
  color: #5c7482;
  font-size: 21px;
  line-height: 66px;
  font-weight: 500;
  letter-spacing: -.021em;
}
.flight { display: flex; justify-content: space-between; flex: none; height: 194px; padding: 28px 32px 0 36px; border-bottom: 2px solid var(--rule); }
.flight-current { height: 192px; border-bottom: 0; background: #fff; }
.flight-no { font-size: 38.5px; line-height: 48px; font-weight: 500; letter-spacing: 0; }
.flight-route { margin-top: 3.5px; font-size: 29px; line-height: 44px; font-weight: 500; color: var(--blue); letter-spacing: -.035em; }
.flight-time { font-size: 29px; line-height: 44px; font-weight: 500; color: var(--slate); letter-spacing: -.017em; }
.flight-date { margin-top: 3px; font-size: 21px; line-height: 28px; font-weight: 500; color: var(--slate); letter-spacing: -.01em; }
.flight-current .flight-date { margin-right: 2px; }
.past-list { flex: 1; min-height: 0; overflow: hidden; border-left: 2px solid var(--bar); }
.filter-bar { display: flex; align-items: center; gap: 16px; flex: none; height: 106px; padding: 0 0 4px 39px; border-top: 2px solid var(--rule); background: var(--bar); }
.filter-circle { display: flex; align-items: center; justify-content: center; width: 63px; height: 63px; border: 2px solid var(--blue); border-radius: 50%; }
.filter-icon { width: 22px; height: 22px; fill: var(--blue); margin-top: 2px; }
.filter-text { margin-bottom: 2px; font-size: 29px; font-weight: 600; color: #0a80c4; letter-spacing: -.04em; }

/* Map */
.main { width: 1404px; }
.map-panel { position: relative; height: 706px; background: #2f374a; overflow: hidden; }
.map { position: absolute; left: 0; top: 0; width: 1404px; height: 706px; }
.world { filter: drop-shadow(0 4px 10px rgba(36, 42, 66, .55)); }
.land { fill: #37414e; stroke: #20699b; stroke-width: 1.2; vector-effect: non-scaling-stroke; stroke-linejoin: round; }
.sea { fill: #2f374a; stroke: #20699b; stroke-width: 1.2; vector-effect: non-scaling-stroke; }
.border { fill: none; stroke: #20648f; stroke-width: 1.2; vector-effect: non-scaling-stroke; }
.strong { stroke-width: 1.9; }
.track { fill: none; stroke: #fff; stroke-width: 1.15; }
.bundle { stroke-width: 3.2; }
.waypoints { fill: var(--blue); stroke: #fff; stroke-width: 1.2; }
.map-head { position: relative; display: flex; justify-content: space-between; padding: 40px 48px 0 54px; color: #fff; }
.airport { width: 182px; padding-top: 7px; }
.arrival { width: 188px; text-align: right; }
.airport-code { font-size: 65.5px; line-height: 70px; font-weight: 700; letter-spacing: -.02em; }
.arrival .airport-code { padding-right: 4px; }
.airport-time { padding-top: 1px; font-size: 29px; line-height: 32px; letter-spacing: .01em; }
.arrival .airport-time { letter-spacing: -.01em; }
.route { width: 932px; height: 70px; }
.route-dots { fill: #b8c4cf; }
.plane { fill: none; stroke: #3fa3e0; stroke-width: 2; stroke-linejoin: round; }
.durations { position: absolute; left: 54px; bottom: 40px; color: #fff; }
.duration { display: flex; align-items: baseline; gap: 7px; height: 36px; line-height: 36px; }
.duration dt { font-size: 19px; font-weight: 700; color: #00aeef; letter-spacing: -.03em; }
.duration dd { font-size: 28.5px; letter-spacing: .007em; }

/* Tabs */
.tabs-area { height: 162px; padding: 40px 0 0 392px; }
.segmented { display: flex; width: 686px; height: 58px; border: 2px solid var(--blue); border-radius: 8px; overflow: hidden; }
.tab { flex: 1; text-align: center; font-size: 25px; line-height: 54px; color: var(--blue); letter-spacing: -.045em; }
.tab-active { background: var(--blue); color: #fff; }

/* Metrics */
.metrics { height: 358px; padding: 26px 0 0 54px; border-top: 2px solid var(--rule); background: var(--pale); overflow: hidden; }
.heading { display: flex; align-items: baseline; gap: 10px; font-size: 37px; line-height: 48px; height: 48px; letter-spacing: -.03em; }
.tag { font-size: 29px; font-weight: 700; color: var(--blue); letter-spacing: -.03em; }
.cards { display: flex; gap: 20px; margin: 20px 0 0 -131px; }
.card { flex: none; height: 232px; padding: 30px 0 0 36px; background: #fff; border: 2px solid var(--rule); border-radius: 6px; }
.card-around { width: 299px; }
.card-track { width: 314px; }
.card-fuel { width: 454px; }
.card-otp { width: 324px; margin-top: 2px; }
.card-label { height: 48px; font-size: 19px; line-height: 24px; font-weight: 700; color: #0a80c4; letter-spacing: -.02em; }
.label-around { padding-left: 3px; }
.card-value { margin-top: 11px; font-size: 96px; line-height: 96px; letter-spacing: 0; }
.num-around { margin-left: -3px; }
.num-around + .unit { margin-left: -8px; }
.num-fuel { letter-spacing: -.005em; }
.num-otp { letter-spacing: .01em; }
.unit { margin-left: -3px; font-size: 57px; letter-spacing: -.035em; }

/* Threats and events */
.threats { display: flex; height: 310px; padding-top: 4px; }
.threat-col { width: 701px; padding: 38px 37px 0 54px; }
.right { width: 703px; padding: 38px 40px 0 51px; border-left: 2px solid var(--rule); }
.threat-heading { height: 80px; border-bottom: 2px solid var(--rule); font-size: 38px; letter-spacing: -.04em; }
.egll-name { padding-left: 4px; letter-spacing: -.03em; }
.event { display: flex; justify-content: space-between; height: 112px; padding: 28px 10px 0 0; border-bottom: 2px solid var(--pale); }
.event-name { margin-top: 5.5px; font-size: 28.5px; line-height: 36px; letter-spacing: -.041em; }
.second { padding-top: 30px; }
.bars { display: flex; align-items: flex-end; gap: 4px; height: 48px; }
.bars i { width: 10px; background: var(--bar); }
.bars i:nth-child(1) { height: 20px; }
.bars i:nth-child(2) { height: 32px; }
.bars i:nth-child(3) { height: 48px; }
.low i:nth-child(1) { background: #f7b500; }
.medium i:nth-child(-n+2) { background: #fa6400; }
.right .bars { margin-top: 4px; }
.right .second .event-name { margin-top: 9.500px; }
.right .second .bars { margin-top: 18px; }
```
